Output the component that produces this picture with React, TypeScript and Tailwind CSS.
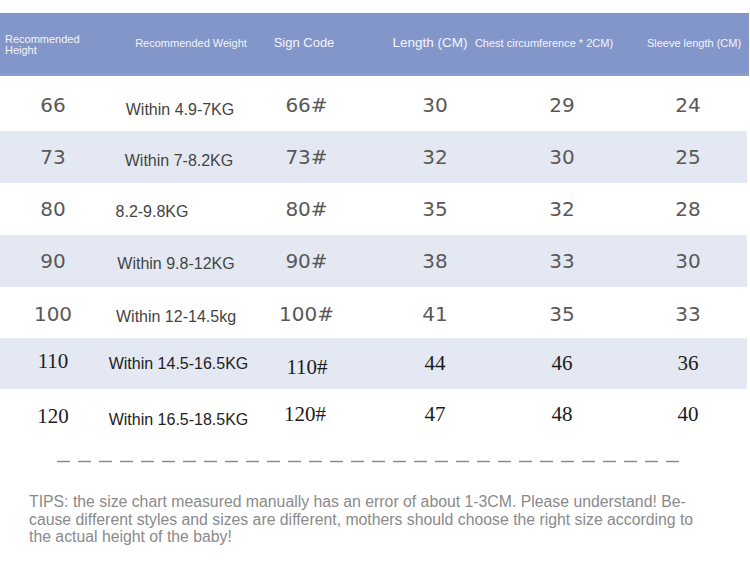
import React from "react";

type Row = {
  h: string;
  w: string;
  s: string;
  l: string;
  c: string;
  sl: string;
  bg: string;
  hClass: string;
  wShift: string;
  serif: boolean;
};

const rows: Row[] = [
  { h: "66", w: "Within 4.9-7KG", s: "66#", l: "30", c: "29", sl: "24", bg: "bg-white", hClass: "h-[55px] pt-[2px]", wShift: "pt-[11px] pl-[0px]", serif: false },
  { h: "73", w: "Within 7-8.2KG", s: "73#", l: "32", c: "30", sl: "25", bg: "bg-[#e4e8f3]", hClass: "h-[52px]", wShift: "pt-[8px] pr-[2px]", serif: false },
  { h: "80", w: "8.2-9.8KG", s: "80#", l: "35", c: "32", sl: "28", bg: "bg-white", hClass: "h-[52px]", wShift: "pt-[6px] pr-[56px]", serif: false },
  { h: "90", w: "Within 9.8-12KG", s: "90#", l: "38", c: "33", sl: "30", bg: "bg-[#e4e8f3]", hClass: "h-[52px]", wShift: "pt-[6px] pr-[8px]", serif: false },
  { h: "100", w: "Within 12-14.5kg", s: "100#", l: "41", c: "35", sl: "33", bg: "bg-white", hClass: "h-[51px] pt-[2px]", wShift: "pt-[6px] pr-[8px]", serif: false },
  { h: "110", w: "Within 14.5-16.5KG", s: "110#", l: "44", c: "46", sl: "36", bg: "bg-[#e4e8f3]", hClass: "h-[51px]", wShift: "pr-[3px]", serif: true },
  { h: "120", w: "Within 16.5-18.5KG", s: "120#", l: "47", c: "48", sl: "40", bg: "bg-white", hClass: "h-[52px]", wShift: "pt-[10px] pr-[3px]", serif: true },
];

function Cell({ children, className = "" }: { children: React.ReactNode; className?: string }) {
  return (
    <div className={`flex items-center justify-center whitespace-nowrap ${className}`}>{children}</div>
  );
}

export default function App() {
  return (
    <div className="w-[750px] h-[573px] bg-white overflow-hidden pt-[13px] [font-family:'Liberation_Sans',Arial,sans-serif]">
      {/* Header */}
      <div className="w-[749px] h-[63px] bg-[#8396ca] border-b-[3px] border-[#8b9dcf] grid grid-cols-[130px_122px_104px_148px_80px_165px] text-[#f2f4fb]">
        <div className="flex flex-col justify-center pl-[5px] text-[11px] leading-[11px] pt-[3px]">
          <span>Recommended</span>
          <span>Height</span>
        </div>
        <Cell className="text-[11px]">Recommended Weight</Cell>
        <Cell className="text-[13px] pb-[1px]">Sign Code</Cell>
        <Cell className="text-[13.5px]">Length (CM)</Cell>
        <Cell className="text-[11px]">Chest circumference * 2CM)</Cell>
        <Cell className="text-[11px] pl-[55px]">Sleeve length (CM)</Cell>
      </div>

      {/* Rows */}
      {rows.map((r) => {
        const num = r.serif
          ? "[font-family:'Liberation_Serif','Times_New_Roman',serif] text-[21px] text-[#1c1c1c]"
          : "[font-family:'DejaVu_Sans',Verdana,sans-serif] text-[20px] text-[#595959]";
        const wt = r.serif ? "text-[16px] text-[#222222]" : "text-[16px] text-[#444444]";
        return (
          <div
            key={r.h}
            className={`w-[747px] ${r.hClass} ${r.bg} grid grid-cols-[106px_148px_104px_154px_100px_135px]`}
          >
            <Cell className={`${num} ${r.serif ? (r.h === "110" ? "pb-[4px]" : "pt-[3px]") : ""}`}>{r.h}</Cell>
            <Cell className={`${wt} ${r.wShift}`}>{r.w}</Cell>
            <Cell className={`${num} ${r.serif ? (r.h === "110" ? "pt-[8px] pl-[2px]" : "pr-[2px]") : "pl-[1px]"}`}>{r.s}</Cell>
            <Cell className={`${num}`}>{r.l}</Cell>
            <Cell className={`${num}`}>{r.c}</Cell>
            <Cell className={`${num} pl-[17px]`}>{r.sl}</Cell>
          </div>
        );
      })}

      {/* Dashed line */}
      <div className="pl-[57px] pt-[19px]">
        <svg width="626" height="3" className="block">
          <line x1="0" y1="1.5" x2="626" y2="1.5" stroke="#8c8c8c" strokeWidth="1.5" strokeDasharray="13 8" />
        </svg>
      </div>

      {/* Tips */}
      <div className="pl-[29px] pt-[30px] text-[15.8px] leading-[17.5px] text-[#8a8a8a]">
        <div className="whitespace-nowrap">
          TIPS: the size chart measured manually has an error of about 1-3CM. Please understand! Be-
        </div>
        <div className="whitespace-nowrap">
          cause different styles and sizes are different, mothers should choose the right size according to
        </div>
        <div className="whitespace-nowrap">the actual height of the baby!</div>
      </div>
    </div>
  );
}
